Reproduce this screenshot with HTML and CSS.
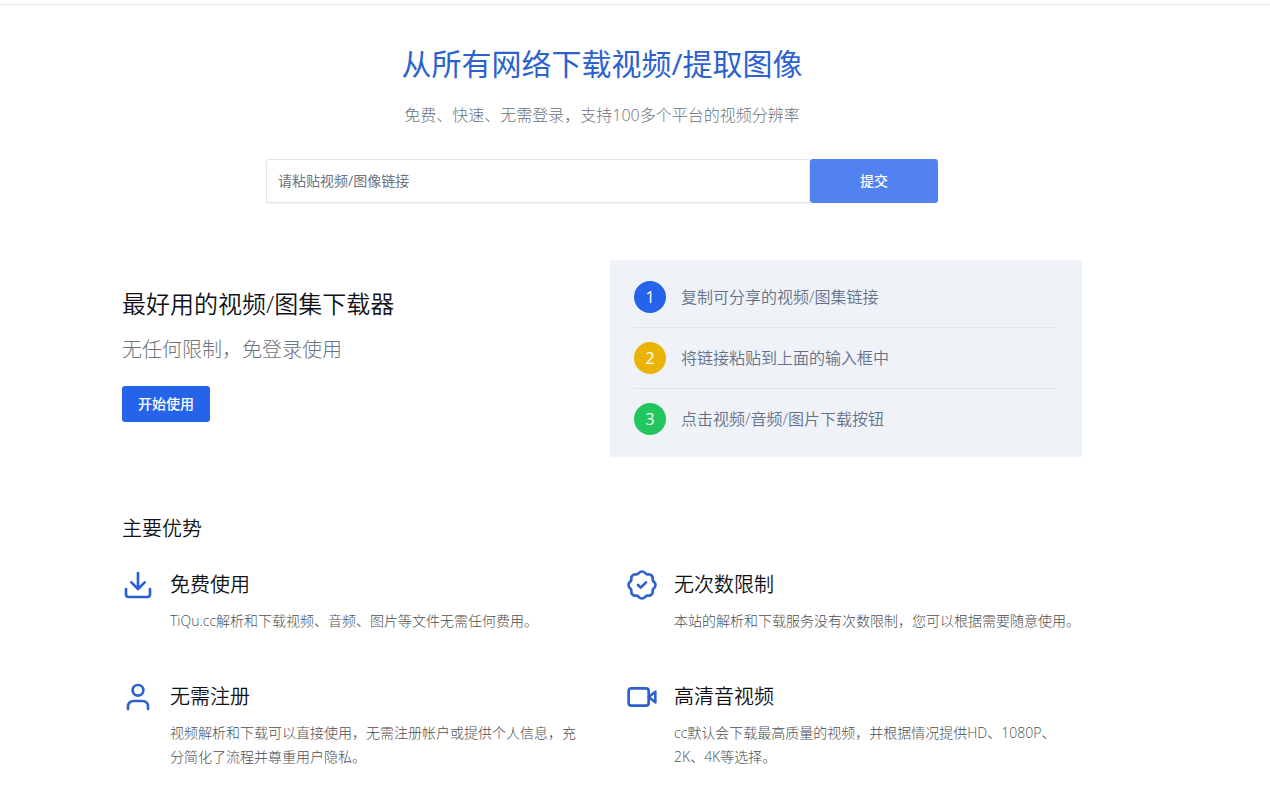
FILE: index.html
```html
<!DOCTYPE html>
<html lang="zh-CN">
<head>
  <meta charset="UTF-8">
  <meta name="viewport" content="width=device-width, initial-scale=1">
  <title>从所有网络下载视频/提取图像</title>
  <link rel="stylesheet" href="styles.css">
</head>
<body>
  <header class="topbar"></header>

  <main>
    <section class="hero">
      <h1>从所有网络下载视频/提取图像</h1>
      <p>免费、快速、无需登录，支持100多个平台的视频分辨率</p>
      <form class="search" onsubmit="return false">
        <input type="text" id="link" aria-label="视频/图像链接" placeholder="请粘贴视频/图像链接">
        <button type="submit">提交</button>
      </form>
    </section>

    <section class="intro">
      <div class="intro-text">
        <h2>最好用的视频/图集下载器</h2>
        <p>无任何限制，免登录使用</p>
        <button type="button" onclick="document.getElementById('link').focus()">开始使用</button>
      </div>
      <ol class="steps">
        <li><span class="num blue">1</span>复制可分享的视频/图集链接</li>
        <li><span class="num yellow">2</span>将链接粘贴到上面的输入框中</li>
        <li><span class="num green">3</span>点击视频/音频/图片下载按钮</li>
      </ol>
    </section>

    <section class="features">
      <h2>主要优势</h2>
      <div class="grid">
        <div class="feature">
          <svg viewBox="0 0 24 24"><path d="M3 15v4a2 2 0 0 0 2 2h14a2 2 0 0 0 2-2v-4M12 3v11M7 10l5 5 5-5"/></svg>
          <div>
            <h3>免费使用</h3>
            <p>TiQu.cc解析和下载视频、音频、图片等文件无需任何费用。</p>
          </div>
        </div>

        <div class="feature">
          <svg viewBox="0 0 24 24"><path d="M9.730 2.880A3.100 3.100 0 0 1 14.270 2.880A2.400 2.400 0 0 0 16.840 3.940A3.100 3.100 0 0 1 20.060 7.160A2.400 2.400 0 0 0 21.120 9.730A3.100 3.100 0 0 1 21.120 14.270A2.400 2.400 0 0 0 20.060 16.840A3.100 3.100 0 0 1 16.840 20.060A2.400 2.400 0 0 0 14.270 21.120A3.100 3.100 0 0 1 9.730 21.120A2.400 2.400 0 0 0 7.160 20.060A3.100 3.100 0 0 1 3.940 16.840A2.400 2.400 0 0 0 2.880 14.270A3.100 3.100 0 0 1 2.880 9.730A2.400 2.400 0 0 0 3.940 7.160A3.100 3.100 0 0 1 7.160 3.940A2.400 2.400 0 0 0 9.730 2.880z"/><path d="M9 12l2 2 4-4"/></svg>
          <div>
            <h3>无次数限制</h3>
            <p>本站的解析和下载服务没有次数限制，您可以根据需要随意使用。</p>
          </div>
        </div>

        <div class="feature">
          <svg viewBox="0 0 24 24"><circle cx="12" cy="7" r="4"/><path d="M4.500 21v-2a4 4 0 0 1 4-4h7a4 4 0 0 1 4 4v2"/></svg>
          <div>
            <h3>无需注册</h3>
            <p>视频解析和下载可以直接使用，无需注册帐户或提供个人信息，充分简化了流程并尊重用户隐私。</p>
          </div>
        </div>

        <div class="feature">
          <svg viewBox="0 0 24 24"><rect x="2" y="5.500" width="15" height="13" rx="2"/><path d="M22 8l-5 4 5 4z"/></svg>
          <div>
            <h3>高清音视频</h3>
            <p>cc默认会下载最高质量的视频，并根据情况提供HD、1080P、2K、4K等选择。</p>
          </div>
        </div>
      </div>
    </section>
  </main>
</body>
</html>
```
FILE: styles.css
```css
* {
  box-sizing: border-box;
}

body {
  margin: 0;
  background: #fff;
  color: #0f1117;
  font-family: "Open Sans", "Noto Sans CJK SC", sans-serif;
  font-weight: 300;
}

h1, h2, h3, p, ol {
  margin: 0;
  padding: 0;
  font-weight: 300;
}

button, input {
  font-family: inherit;
  font-size: 14px;
}

button {
  border: none;
  border-radius: 3px;
  background: #2563eb;
  color: #fff;
  font-weight: 500;
  cursor: pointer;
}

.topbar {
  height: 5px;
  border-bottom: 1px solid #e5e7eb;
}

main {
  max-width: 1026px;
  margin: 0 auto;
  padding: 41px 66px 41px 0;
}

.hero {
  text-align: center;
}

.hero h1 {
  font-size: 30px;
  line-height: 36px;
  font-weight: 400;
  color: #2c62d0;
}

.hero p {
  margin-top: 21px;
  font-size: 16px;
  line-height: 24px;
  color: #6b7280;
}

.search {
  display: flex;
  max-width: 672px;
  height: 44px;
  margin: 32px auto 0;
}

.search input {
  flex: 1;
  min-width: 0;
  padding: 0 11px 2px;
  border: 1px solid #e2e5ea;
  border-radius: 2px;
  font-weight: 400;
  box-shadow: 0 1px 2px rgba(0, 0, 0, 0.05);
}

.search input::placeholder {
  color: #6b7280;
}

.search button {
  width: 128px;
  padding: 0 0 2px;
  background: #5182ef;
}

.intro {
  display: grid;
  grid-template-columns: 1fr 1fr;
  gap: 16px;
  margin-top: 57px;
}

.intro-text {
  padding-top: 28px;
}

.intro-text h2 {
  font-size: 24px;
  line-height: 32px;
  font-weight: 350;
}

.intro-text p {
  margin-top: 16px;
  font-size: 20px;
  line-height: 28px;
  color: #6b7280;
}

.intro-text button {
  width: 88px;
  height: 36px;
  margin-top: 22px;
  padding: 0 0 2px;
}

.steps {
  padding: 7px 24px 8px;
  border-radius: 2px;
  background: #eff3f8;
  list-style: none;
}

.steps li {
  display: flex;
  align-items: center;
  gap: 15px;
  padding: 14px 0;
  font-size: 16px;
  line-height: 24px;
  font-weight: 350;
  color: #64708a;
}

.steps li + li {
  border-top: 1px solid #e0e5eb;
}

.num {
  width: 32px;
  border-radius: 50%;
  line-height: 32px;
  text-align: center;
  color: #fff;
  font-weight: 500;
}

.blue {
  background: #2563eb;
}

.yellow {
  background: #eab308;
}

.green {
  background: #22c55e;
}

.features {
  margin-top: 58px;
}

.features h2 {
  font-size: 20px;
  line-height: 28px;
  font-weight: 350;
}

.grid {
  display: grid;
  grid-template-columns: 1fr 1fr;
  gap: 48px;
  margin-top: 26px;
}

.feature {
  display: flex;
  gap: 16px;
}

.feature svg {
  flex: none;
  width: 32px;
  height: 32px;
  fill: none;
  stroke: #2c62d0;
  stroke-width: 2;
  stroke-linecap: round;
  stroke-linejoin: round;
}

.feature h3 {
  font-size: 20px;
  line-height: 32px;
  font-weight: 350;
}

.feature p {
  margin-top: 8px;
  font-size: 14px;
  line-height: 24px;
  color: #4b4d52;
}

@media (max-width: 800px) {
  main {
    padding: 41px 20px;
  }

  .intro, .grid {
    grid-template-columns: 1fr;
  }
}
```
